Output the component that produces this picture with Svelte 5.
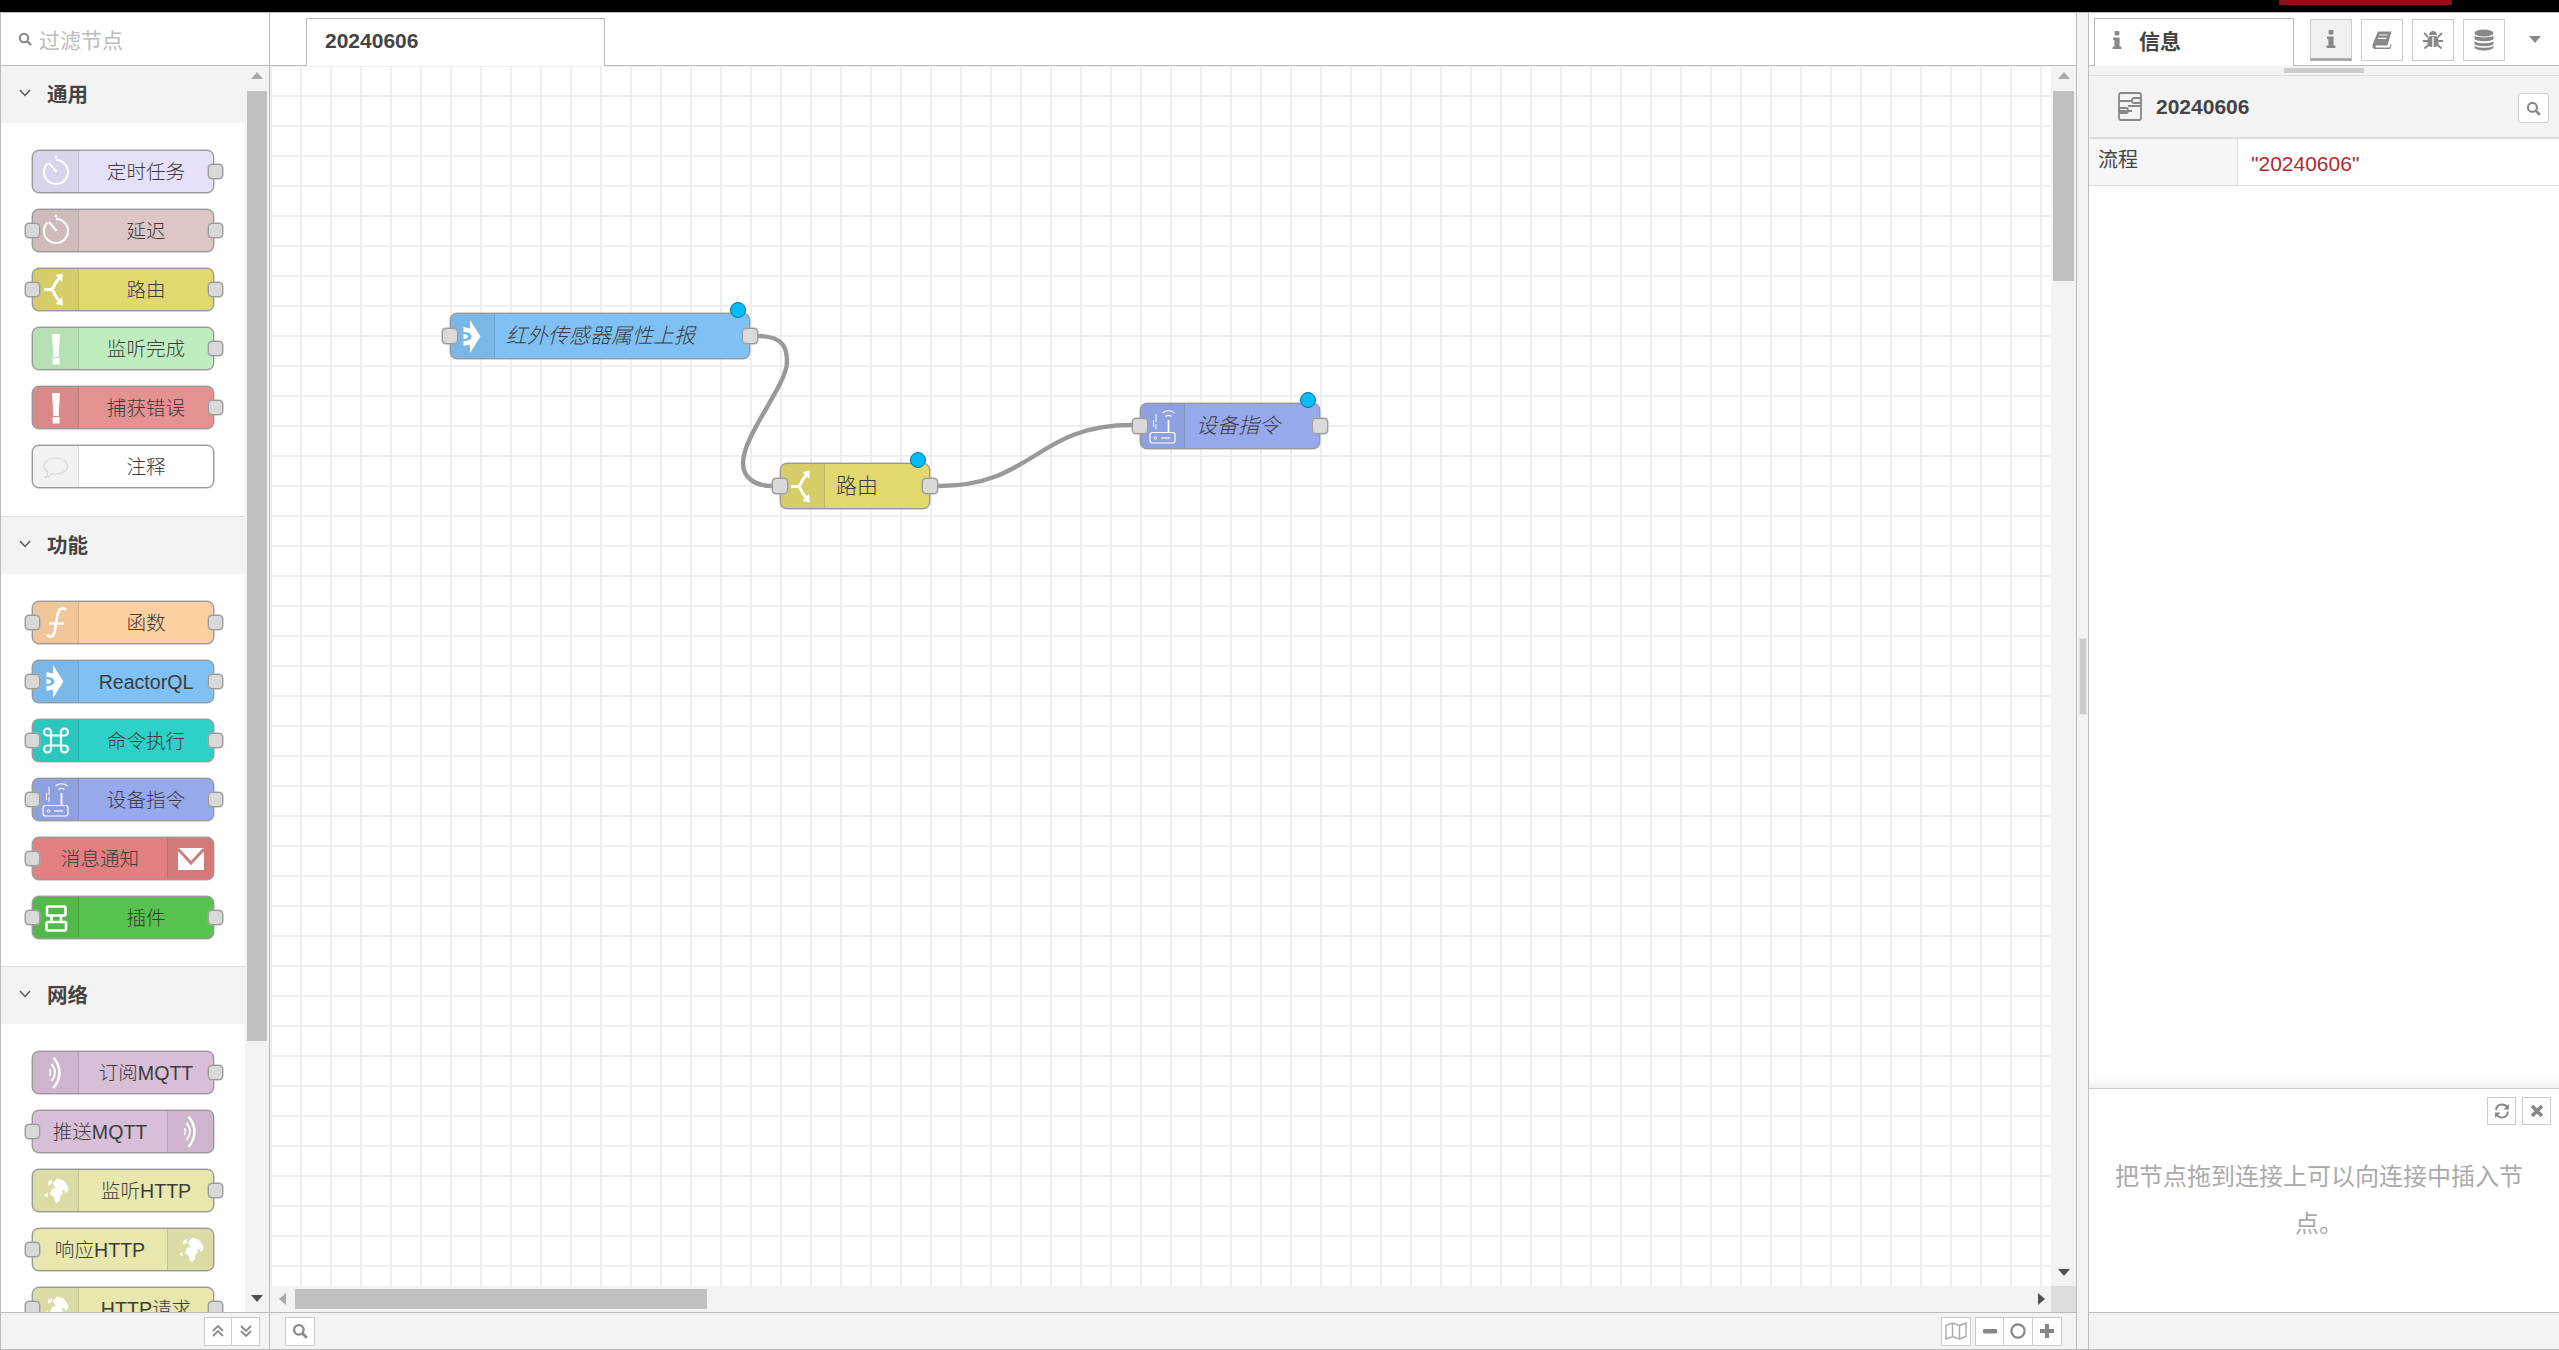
<script>
	const categories = [
		{
			name: '通用',
			nodes: [
				{ label: '定时任务', color: '#e6e0f8', icon: 'timer', input: false, output: true },
				{ label: '延迟', color: '#dcc6c6', icon: 'timer', input: true, output: true },
				{ label: '路由', color: '#e2d96e', icon: 'switch', input: true, output: true },
				{ label: '监听完成', color: '#c0edc0', icon: 'alert', input: false, output: true },
				{ label: '捕获错误', color: '#e49191', icon: 'alert', input: false, output: true },
				{ label: '注释', color: '#ffffff', icon: 'comment', input: false, output: false }
			]
		},
		{
			name: '功能',
			nodes: [
				{ label: '函数', color: '#fdd0a2', icon: 'func', input: true, output: true },
				{ label: 'ReactorQL', color: '#7fc1f5', icon: 'reactor', input: true, output: true },
				{ label: '命令执行', color: '#2ed1c9', icon: 'command', input: true, output: true },
				{ label: '设备指令', color: '#97a9ec', icon: 'router', input: true, output: true },
				{ label: '消息通知', color: '#e08080', icon: 'mail', input: true, output: false, right: true },
				{ label: '插件', color: '#57c24d', icon: 'plugin', input: true, output: true }
			]
		},
		{
			name: '网络',
			nodes: [
				{ label: '订阅MQTT', color: '#d8bfd8', icon: 'wifi', input: false, output: true },
				{ label: '推送MQTT', color: '#d8bfd8', icon: 'wifi', input: true, output: false, right: true },
				{ label: '监听HTTP', color: '#e7e7ae', icon: 'globe', input: false, output: true },
				{ label: '响应HTTP', color: '#e7e7ae', icon: 'globe', input: true, output: false, right: true },
				{ label: 'HTTP请求', color: '#e7e7ae', icon: 'globe', input: true, output: true }
			]
		}
	];

	const flowNodes = [
		{ label: '红外传感器属性上报', color: '#7fc1f5', icon: 'reactor', x: 180, y: 247, w: 300, italic: true },
		{ label: '路由', color: '#e2d96e', icon: 'switch', x: 510, y: 397, w: 150, italic: false },
		{ label: '设备指令', color: '#97a9ec', icon: 'router', x: 870, y: 337, w: 180, italic: true }
	];
</script>

{#snippet nodeIcon(name, mailColor)}
	<svg class="node-svg" viewBox="0 0 46 43" width="46" height="43" fill="none" stroke="#fff" aria-hidden="true">
		{#if name === 'timer'}
			<path d="M23 10 A12 12 0 1 1 14.5 13.5" stroke-width="2" />
			<path d="M23.5 22 L16 13" stroke-width="2" />
			<circle cx="23" cy="7" r="1.4" fill="#fff" stroke="none" />
		{:else if name === 'switch'}
			<path d="M11.5 21.5 H17 C20 21.5 21 19 22 16 L26.5 9.5" stroke-width="3" />
			<path d="M11.5 21.5 H17 C20 21.5 21 24 22 27 L26.5 33.5" stroke-width="3" />
			<path d="M30 5.5 L22.5 7 L29 14 Z" fill="#fff" stroke="none" />
			<path d="M30 37.5 L22.5 36 L29 29 Z" fill="#fff" stroke="none" />
		{:else if name === 'alert'}
			<path d="M19 7 H27 L25.6 30 H20.4 Z" fill="#fff" stroke="none" />
			<rect x="19.6" y="31" width="7" height="6.5" fill="#fff" stroke="none" />
		{:else if name === 'comment'}
			<path d="M23 13 C30 13 34.5 17 34.5 21 C34.5 26 29 29 23 29 C21.5 29 20 29 19 28.5 C17 31 14 32.5 12 32.5 C14 31 15 29 15 27 C12.5 25.5 11 23.5 11 21 C11 17 16 13 23 13 Z" stroke="#d8d8d8" stroke-width="1.2" />
		{:else if name === 'func'}
			<path d="M33 8.5 C28 5.5 25.5 9 24.5 14 L22 29 C21 36 17 37 14 34" stroke-width="2.6" />
			<path d="M16 22.5 H31" stroke-width="2.4" />
		{:else if name === 'reactor'}
			<path d="M20 5 L30.5 21.5 L20 38 L20 29.5 L13.5 31 L13.5 26 C19 26 21.5 24 21.5 21.5 C21.5 19 19 17 13.5 17 L13.5 12 L20 13.5 Z" fill="#fff" stroke="none" />
			<path d="M13.5 19 C16 19 18 20 18 21.5 C18 23 16 24 13.5 24 Z" fill="#fff" stroke="none" />
		{:else if name === 'command'}
			<path d="M18 16.5 H28 V26.5 H18 Z" stroke-width="2.2" />
			<path d="M18 16.5 H14.5 A3.5 3.5 0 1 1 18 13 Z" stroke-width="2.2" />
			<path d="M28 16.5 H31.5 A3.5 3.5 0 1 0 28 13 Z" stroke-width="2.2" />
			<path d="M18 26.5 H14.5 A3.5 3.5 0 1 0 18 30 Z" stroke-width="2.2" />
			<path d="M28 26.5 H31.5 A3.5 3.5 0 1 1 28 30 Z" stroke-width="2.2" />
		{:else if name === 'router'}
			<rect x="10" y="27.5" width="25" height="10.5" rx="2.5" stroke-width="1.2" />
			<circle cx="15.5" cy="33" r="1.3" stroke-width="1" />
			<path d="M21 33 H30" stroke-width="1.2" />
			<path d="M28.5 27 V15" stroke-width="1.8" />
			<path d="M25.5 11.5 C27.5 10 29.5 10 31.5 11.5 M22.5 8 C26.5 5 30.5 5 34.5 8" stroke-width="1.2" />
			<path d="M16 9 V17 M16 19 V24 M13.5 15 V22" stroke-width="1" />
		{:else if name === 'mail'}
			<rect x="10" y="11" width="26" height="22" fill="#fff" stroke="none" />
			<path d="M10 12 L23 26 L36 12" stroke={mailColor} stroke-width="3" />
		{:else if name === 'plugin'}
			<rect x="14" y="10.5" width="18.5" height="9" rx="1" stroke-width="2.6" />
			<rect x="13.5" y="26" width="19.5" height="8.5" rx="1" stroke-width="2.6" />
			<path d="M18.5 19.5 V26 M28 19.5 V26" stroke-width="2.6" />
		{:else if name === 'wifi'}
			<path d="M20.5 6.5 Q32.5 21.5 20.5 37" stroke-width="2.4" />
			<path d="M18.5 13 Q25.5 21.5 18.5 30" stroke-width="2" />
			<path d="M16.5 18 Q18.5 21.5 16.5 25" stroke-width="1.6" />
		{:else if name === 'globe'}
			<g fill="#fff" stroke="none">
				<path d="M24 9.5 C31 10 35 15 35.5 21 L33 24 L31 21 L29 21 L30 24 L27 28 L27 31 L24 34 L22 33 L21 28 L17 25 L19 20 L22 19 L24 20 L21 17 L20 14 L22 12 Z" />
				<path d="M11 26 L15 24 L14.5 28.5 Z" />
				<path d="M15 13 L19 10.5 L19 15 L15 16.5 Z" />
			</g>
		{/if}
	</svg>
{/snippet}

{#snippet searchIcon(size)}
	<svg viewBox="0 0 14 14" width={size} height={size} fill="none" stroke="#888" aria-hidden="true">
		<circle cx="6" cy="6" r="4.2" stroke-width="2" />
		<path d="M9 9 L13 13" stroke-width="2.4" />
	</svg>
{/snippet}

{#snippet infoGlyph()}
	<svg viewBox="0 0 10 18" width="10" height="18" fill="#888" aria-hidden="true">
		<rect x="2.6" y="0" width="4.8" height="4.4" rx="0.8" />
		<path d="M1 6.5 H7.6 V15.5 H9.4 V18 H0.6 V15.5 H2.4 V9 H1 Z" />
	</svg>
{/snippet}

<div class="app">
	<div class="topbar"><div class="deploy"></div></div>

	<div class="main">
		<aside class="palette">
			<div class="filter">
				{@render searchIcon(14)}
				<span>过滤节点</span>
			</div>
			<div class="palette-body">
				<div class="palette-list">
					{#each categories as cat}
						<section class="category">
							<header>
								<svg viewBox="0 0 12 8" width="12" height="8" fill="none" stroke="#555" stroke-width="1.4" aria-hidden="true"><path d="M1 1 L6 6.5 L11 1" /></svg>
								<span>{cat.name}</span>
							</header>
							<div class="category-nodes">
								{#each cat.nodes as n}
									<div class="node palette-node" class:right={n.right} style="background:{n.color}">
										<div class="node-icon">{@render nodeIcon(n.icon, '#d27d7d')}</div>
										<div class="node-label">{n.label}</div>
										{#if n.input}<span class="port in"></span>{/if}
										{#if n.output}<span class="port out"></span>{/if}
									</div>
								{/each}
							</div>
						</section>
					{/each}
				</div>
				<div class="vbar palette-bar">
					<i class="arrow up"></i>
					<div class="vtrack"><div class="thumb palette-thumb"></div></div>
					<i class="arrow down"></i>
				</div>
			</div>
			<footer class="foot palette-foot">
				<div class="btn-group">
					<button aria-label="collapse">
						<svg viewBox="0 0 14 14" width="14" height="14" fill="none" stroke="#8b8b8b" stroke-width="1.8"><path d="M2 7 L7 2 L12 7 M2 12 L7 7 L12 12" /></svg>
					</button>
					<button aria-label="expand">
						<svg viewBox="0 0 14 14" width="14" height="14" fill="none" stroke="#8b8b8b" stroke-width="1.8"><path d="M2 2 L7 7 L12 2 M2 7 L7 12 L12 7" /></svg>
					</button>
				</div>
			</footer>
		</aside>

		<main class="workspace">
			<div class="tabs">
				<div class="tab">20240606</div>
			</div>
			<div class="canvas-wrap">
				<div class="canvas">
					<svg class="wires" width="1782" height="1219" fill="none" stroke="#999" stroke-width="4.4" aria-hidden="true">
						<path d="M488 270 C515 270 517 284 517 296 C517 319 473 369 473 397 C473 412 485 420 502 420" />
						<path d="M668 420 C765 420 765 359 862 359" />
					</svg>
					{#each flowNodes as n}
						<div class="node flow-node" style="left:{n.x}px;top:{n.y}px;width:{n.w}px;background:{n.color}">
							<div class="node-icon">{@render nodeIcon(n.icon, '#d27d7d')}</div>
							<div class="node-label" class:italic={n.italic}>{n.label}</div>
							<span class="port in"></span>
							<span class="port out"></span>
							<span class="changed"></span>
						</div>
					{/each}
				</div>
				<div class="vbar canvas-bar">
					<i class="arrow up"></i>
					<div class="vtrack"><div class="thumb canvas-thumb"></div></div>
					<i class="arrow down"></i>
				</div>
				<div class="hbar">
					<i class="arrow left"></i>
					<div class="htrack"><div class="thumb hthumb"></div></div>
					<i class="arrow right-a"></i>
				</div>
				<div class="corner"></div>
			</div>
			<footer class="foot work-foot">
				<button class="single" aria-label="search">{@render searchIcon(16)}</button>
				<div class="zoom-tools">
					<button class="single" aria-label="map">
						<svg viewBox="0 0 22 18" width="22" height="18" fill="none" stroke="#aaa" stroke-width="1.4"><path d="M1 3.5 L7.5 1 L14.5 3.5 L21 1 V14.5 L14.5 17 L7.5 14.5 L1 17 Z M7.5 1 V14.5 M14.5 3.5 V17" /></svg>
					</button>
					<div class="btn-group zoom-group">
						<button aria-label="zoom out"><svg viewBox="0 0 16 16" width="16" height="16" fill="#888"><rect x="1" y="6" width="14" height="4.4" rx="0.8" /></svg></button>
						<button aria-label="reset"><svg viewBox="0 0 16 16" width="16" height="16" fill="none" stroke="#888" stroke-width="2.2"><circle cx="8" cy="8" r="6.6" /></svg></button>
						<button aria-label="zoom in"><svg viewBox="0 0 16 16" width="16" height="16" fill="#888"><path d="M6 1 H10 V6 H15 V10 H10 V15 H6 V10 H1 V6 H6 Z" /></svg></button>
					</div>
				</div>
			</footer>
		</main>

		<div class="divider"><div class="grip"></div></div>

		<aside class="sidebar">
			<div class="side-tabs">
				<div class="side-tab">
					{@render infoGlyph()}
					<span>信息</span>
				</div>
				<div class="side-buttons">
					<button class="side-btn active" aria-label="info">{@render infoGlyph()}</button>
					<button class="side-btn" aria-label="help">
						<svg viewBox="0 0 20 18" width="20" height="18" fill="#888"><path d="M6 0.5 H19.5 L15.5 14.5 H4.5 C3 14.5 3 16.4 4.5 16.4 H17.6 L18.6 13 L19.6 13.8 L18.2 18 H3.6 C0.6 18 0 15.5 0.8 13 Z" /><path d="M7 4 H15.5 M6 7.4 H14.5" stroke="#f3f3f3" stroke-width="1.2" /></svg>
					</button>
					<button class="side-btn" aria-label="debug">
						<svg viewBox="0 0 20 20" width="20" height="20" fill="#888"><path d="M6 5 C6 2.5 8 1 10 1 C12 1 14 2.5 14 5 Z" /><rect x="4.5" y="6" width="11" height="11" rx="4" /><path d="M1 3 L5 7 M19 3 L15 7 M0 11 H5 M15 11 H20 M1.5 18.5 L5.5 15 M18.5 18.5 L14.5 15" stroke="#888" stroke-width="1.8" /><path d="M10 7 V18" stroke="#fff" stroke-width="1.4" /></svg>
					</button>
					<button class="side-btn" aria-label="context">
						<svg viewBox="0 0 20 22" width="20" height="22" fill="#888"><ellipse cx="10" cy="4" rx="9.5" ry="3.6" /><path d="M0.5 6.5 C2 9 18 9 19.5 6.5 V10 C18 13 2 13 0.5 10 Z" /><path d="M0.5 12 C2 15 18 15 19.5 12 V15 C18 18 2 18 0.5 15 Z" /><path d="M0.5 16.5 C2 19.5 18 19.5 19.5 16.5 V18.5 C18 22.5 2 22.5 0.5 18.5 Z" /></svg>
					</button>
					<i class="tab-caret"></i>
				</div>
			</div>
			<div class="side-grip"><div></div></div>
			<div class="info-head">
				<svg viewBox="0 0 24 29" width="24" height="29" fill="none" stroke="#888" stroke-width="1.8" aria-hidden="true">
					<rect x="1" y="1" width="22" height="27" rx="2" />
					<path d="M1 9 H14 M1 19 H14 M10 14 H23" />
					<rect x="14" y="6" width="9" height="5" rx="2" />
					<rect x="1" y="16" width="9" height="5" rx="2" />
				</svg>
				<b>20240606</b>
				<button class="single info-search" aria-label="search">{@render searchIcon(15)}</button>
			</div>
			<div class="info-row">
				<div class="info-key">流程</div>
				<div class="info-value">"20240606"</div>
			</div>
			<div class="info-space"></div>
			<div class="help">
				<div class="help-tools">
					<button class="single" aria-label="refresh">
						<svg viewBox="0 0 16 16" width="16" height="16" fill="none" stroke="#888" stroke-width="2"><path d="M2 7 C2.5 3.5 5 1.5 8 1.5 C10.5 1.5 12.5 3 13.5 4.5" /><path d="M14 8.5 C13.5 12.5 11 14.5 8 14.5 C5.5 14.5 3.5 13 2.5 11.5" /><path d="M15 1 V6.5 H9.5 Z M1 15 V9.5 H6.5 Z" fill="#888" stroke="none" /></svg>
					</button>
					<button class="single" aria-label="close">
						<svg viewBox="0 0 14 14" width="14" height="14" stroke="#888" stroke-width="3.6"><path d="M2 2 L12 12 M12 2 L2 12" /></svg>
					</button>
				</div>
				<p>把节点拖到连接上可以向连接中插入节点。</p>
			</div>
			<footer class="foot side-foot"></footer>
		</aside>
	</div>
</div>

<style>
	:global(body) {
		margin: 0;
		background: #fff;
		font-family: 'Liberation Sans', 'Noto Sans CJK SC', sans-serif;
		color: #333;
	}

	.app {
		width: 2559px;
		height: 1350px;
		display: flex;
		flex-direction: column;
		overflow: hidden;
	}

	.topbar {
		height: 12px;
		flex: none;
		background: #000;
	}

	.deploy {
		margin-left: 2279px;
		width: 173px;
		height: 5px;
		background: #8c101c;
	}

	.main {
		flex: 1;
		min-height: 0;
		display: flex;
		border-top: 1px solid #bbb;
		border-bottom: 1px solid #bbb;
	}

	button {
		padding: 0;
		background: #fff;
		border: 1px solid #ccc;
		display: flex;
		align-items: center;
		justify-content: center;
	}

	/* palette */
	.palette {
		width: 270px;
		flex: none;
		box-sizing: border-box;
		display: flex;
		flex-direction: column;
		border-left: 1px solid #bbb;
		border-right: 1px solid #bbb;
	}

	.filter {
		height: 53px;
		flex: none;
		box-sizing: border-box;
		border-bottom: 1px solid #bbb;
		display: flex;
		align-items: center;
		gap: 7px;
		padding-left: 17px;
		font-size: 21px;
		color: #bbb;
	}

	.palette-body {
		flex: 1;
		min-height: 0;
		display: flex;
	}

	.palette-list {
		width: 244px;
		flex: none;
		overflow: hidden;
	}

	.category {
		border-top: 1px solid #ddd;
	}

	.category:first-child {
		border-top: 0;
		padding-bottom: 1px;
	}

	.category header {
		height: 57px;
		box-sizing: border-box;
		padding-bottom: 3px;
		background: #f3f3f3;
		display: flex;
		align-items: center;
		padding-left: 18px;
		gap: 16px;
		font-size: 20.5px;
		font-weight: 700;
		color: #444;
	}

	.category-nodes {
		padding: 27px 0 27px 31px;
		display: flex;
		flex-direction: column;
		gap: 16px;
	}

	.node {
		box-sizing: border-box;
		position: relative;
		display: flex;
		border: 1px solid #999;
		border-radius: 7px;
		font-size: 19.6px;
		color: #3c3c3c;
		box-shadow: 0 0 0 0.5px #aaa;
	}

	.palette-node {
		width: 182px;
		height: 43px;
	}

	.palette-node.right {
		flex-direction: row-reverse;
	}

	.node-icon {
		flex: none;
		width: 45px;
		background: rgba(0, 0, 0, 0.05);
		border-right: 1px solid rgba(0, 0, 0, 0.1);
		border-radius: 6px 0 0 6px;
		display: flex;
		align-items: center;
		justify-content: center;
	}

	.palette-node.right .node-icon {
		border-right: 0;
		border-left: 1px solid rgba(0, 0, 0, 0.1);
		border-radius: 0 6px 6px 0;
	}

	.node-svg {
		flex: none;
	}

	.node-label {
		flex: 1;
		display: flex;
		align-items: center;
		justify-content: center;
		white-space: nowrap;
		line-height: 24px;
		font-weight: 300;
	}

	.port {
		position: absolute;
		top: 50%;
		width: 15px;
		height: 15px;
		margin-top: -8px;
		box-sizing: border-box;
		background: #d9d9d9;
		border: 1px solid #999;
		border-radius: 4px;
		box-shadow: 0 0 0 0.5px #aaa;
	}

	.port.in {
		left: -8px;
	}

	.port.out {
		right: -10px;
	}

	/* workspace */
	.workspace {
		width: 1807px;
		flex: none;
		display: flex;
		flex-direction: column;
		box-sizing: border-box;
		border-right: 1px solid #bbb;
	}

	.tabs {
		height: 53px;
		flex: none;
		box-sizing: border-box;
		border-bottom: 1px solid #bbb;
		padding: 5px 0 0 36px;
	}

	.tab {
		width: 299px;
		height: 48px;
		box-sizing: border-box;
		background: #fff;
		border: 1px solid #bbb;
		border-bottom: 0;
		padding: 10px 0 0 18px;
		font-size: 21px;
		font-weight: 700;
		color: #444;
	}

	.canvas-wrap {
		flex: 1;
		min-height: 0;
		display: grid;
		grid-template-columns: 1fr 25px;
		grid-template-rows: 1fr 26px;
	}

	.canvas {
		position: relative;
		overflow: hidden;
		background-color: #fff;
		background-image: linear-gradient(#eee 2px, transparent 2px), linear-gradient(90deg, #eee 2px, transparent 2px);
		background-size: 30px 30px;
		background-position: 0 -1px, 0 0;
	}

	.wires {
		position: absolute;
		left: 0;
		top: 0;
	}

	.flow-node {
		position: absolute;
		height: 46px;
		font-size: 21px;
	}

	.flow-node .node-icon {
		width: 43px;
	}

	.flow-node .node-label {
		justify-content: flex-start;
		padding-left: 11px;
	}

	.flow-node .port {
		width: 16px;
		height: 16px;
		margin-top: -8px;
	}

	.flow-node .port.in {
		left: -9px;
	}

	.flow-node .port.out {
		right: -9px;
	}

	.flow-node .node-label.italic {
		font-style: italic;
	}

	.changed {
		position: absolute;
		right: 3px;
		top: -12px;
		width: 16px;
		height: 16px;
		box-sizing: border-box;
		border-radius: 50%;
		background: #00bcff;
		border: 1px solid #0c6f93;
	}

	.vbar {
		display: flex;
		flex-direction: column;
		align-items: center;
		background: #f3f3f3;
	}

	.palette-bar {
		flex: 1;
	}

	.vtrack {
		flex: 1;
		min-height: 0;
		align-self: stretch;
		padding: 0 2px;
	}

	.thumb {
		background: #c0c0c0;
	}

	.palette-thumb {
		height: 950px;
		margin-top: 12px;
	}

	.canvas-thumb {
		height: 190px;
		margin-top: 12px;
	}

	.arrow {
		flex: none;
		width: 0;
		height: 0;
		border: 6px solid transparent;
	}

	.arrow.up {
		margin-top: 6px;
		border-top: 0;
		border-bottom: 7px solid #aaa;
	}

	.arrow.down {
		margin-bottom: 10px;
		border-bottom: 0;
		border-top: 7px solid #505050;
	}

	.hbar {
		display: flex;
		align-items: center;
		background: #f3f3f3;
		padding: 0 6px 0 9px;
	}

	.htrack {
		flex: 1;
		padding-left: 9px;
	}

	.hthumb {
		width: 412px;
		height: 20px;
	}

	.arrow.left {
		border-left: 0;
		border-right: 7px solid #aaa;
	}

	.arrow.right-a {
		border-right: 0;
		border-left: 7px solid #505050;
	}

	.corner {
		background: #dcdcdc;
	}

	.foot {
		height: 37px;
		flex: none;
		box-sizing: border-box;
		background: #f3f3f3;
		border-top: 1px solid #bbb;
		display: flex;
		align-items: center;
	}

	.palette-foot {
		justify-content: flex-end;
		padding-right: 9px;
	}

	.work-foot {
		justify-content: space-between;
		padding: 0 14px 0 15px;
	}

	.btn-group {
		display: flex;
	}

	.btn-group button {
		width: 28px;
		height: 29px;
		border-left: 0;
	}

	.btn-group button:first-child {
		border-left: 1px solid #ccc;
	}

	.zoom-group button {
		width: 29px;
	}

	.single {
		width: 30px;
		height: 29px;
	}

	.zoom-tools {
		display: flex;
		gap: 4px;
	}

	/* divider */
	.divider {
		width: 11px;
		flex: none;
		background: #f3f3f3;
		border-right: 1px solid #bbb;
		display: flex;
		align-items: center;
		justify-content: center;
	}

	.grip {
		width: 6px;
		height: 75px;
		margin-bottom: 10px;
		background: #ccc;
		box-shadow: 0 0 0 1px #e4e4e4;
	}

	/* sidebar */
	.sidebar {
		flex: 1;
		min-width: 0;
		display: flex;
		flex-direction: column;
	}

	.side-tabs {
		height: 53px;
		flex: none;
		box-sizing: border-box;
		border-bottom: 1px solid #bbb;
		display: flex;
		padding: 5px 0 0 5px;
	}

	.side-tab {
		width: 200px;
		height: 48px;
		box-sizing: border-box;
		background: #fff;
		border: 1px solid #bbb;
		border-bottom: 0;
		display: flex;
		align-items: center;
		gap: 17px;
		padding: 0 0 6px 17px;
		font-size: 21px;
		font-weight: 700;
		color: #444;
	}

	.side-buttons {
		display: flex;
		gap: 9px;
		margin-left: 16px;
		align-items: flex-start;
		padding-top: 1px;
	}

	.side-btn {
		width: 42px;
		height: 42px;
		box-sizing: border-box;
	}

	.side-btn.active {
		background: #f0f0f0;
		border-bottom: 3px solid #aaa;
	}

	.tab-caret {
		margin: 17px 0 0 15px;
		width: 0;
		height: 0;
		border: 6.5px solid transparent;
		border-bottom: 0;
		border-top: 7px solid #888;
	}

	.side-grip {
		height: 10px;
		flex: none;
		box-sizing: border-box;
		background: #f3f3f3;
		border-bottom: 1px solid #ddd;
		display: flex;
		justify-content: center;
		padding: 2px 0 0 0;
	}

	.side-grip div {
		width: 80px;
		height: 5px;
		background: #ccc;
	}

	.info-head {
		height: 63px;
		flex: none;
		box-sizing: border-box;
		background: #f3f3f3;
		border-bottom: 2px solid #ddd;
		display: flex;
		align-items: center;
		padding: 0 10px 0 29px;
		gap: 14px;
		font-size: 21px;
		color: #444;
	}

	.info-search {
		margin-left: auto;
		border-radius: 3px;
		width: 31px;
		height: 30px;
		margin-top: 3px;
	}

	.info-row {
		height: 47px;
		flex: none;
		box-sizing: border-box;
		display: flex;
		border-bottom: 1px solid #ddd;
	}

	.info-key {
		width: 149px;
		box-sizing: border-box;
		background: #f6f6f6;
		border-right: 1px solid #ddd;
		padding: 5px 0 0 9px;
		font-size: 20px;
		color: #444;
	}

	.info-value {
		padding: 13px 0 0 13px;
		font-size: 21px;
		color: #b72828;
	}

	.info-space {
		flex: 1;
		box-shadow: inset 0 -14px 12px -12px rgba(0, 0, 0, 0.1);
	}

	.help {
		height: 224px;
		flex: none;
		box-sizing: border-box;
		border-top: 1px solid #ccc;
	}

	.help-tools {
		display: flex;
		justify-content: flex-end;
		gap: 6px;
		padding: 8px 8px 0 0;
	}

	.help-tools .single {
		width: 29px;
		height: 28px;
	}

	.help p {
		margin: 29px 0 0;
		padding: 0 30px 0 20px;
		text-align: center;
		font-size: 24px;
		line-height: 46.7px;
		color: #aaa;
	}
</style>
